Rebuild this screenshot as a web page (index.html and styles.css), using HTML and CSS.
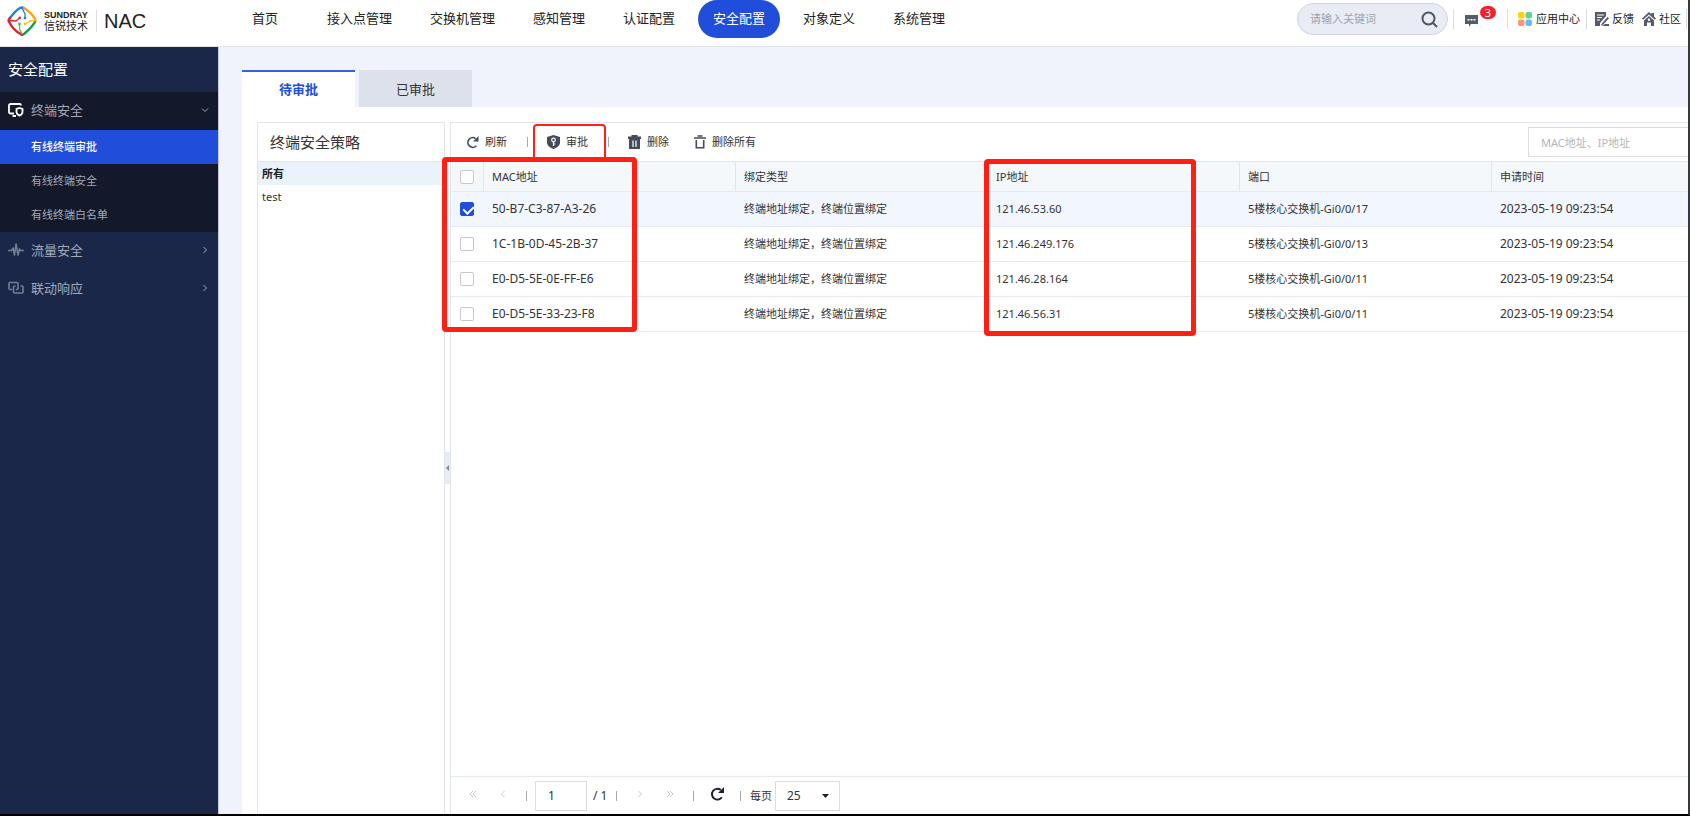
FILE: index.html
```html
<!DOCTYPE html>
<html lang="zh-CN">
<head>
<meta charset="utf-8">
<title>NAC 安全配置</title>
<link rel="stylesheet" href="styles.css">
</head>
<body>
<header class="topbar">
  <div class="brand">
    <svg class="brand-mark" viewBox="0 0 30 30" fill="none" stroke-linecap="round">
      <path d="M3 12C6 8 9 4 13 2q2-1 4 0" stroke="#1384d6" stroke-width="2.4"/>
      <path d="M17 2c5 3 8 6 10.500 10q1.500 2 .5 4" stroke="#f9a11b" stroke-width="2.400"/>
      <path d="M28 16c-3 5-6 8-11 12q-1 .8-2 .8" stroke="#1c9a46" stroke-width="2.400"/>
      <path d="M15 28.800C9 26 4 20 1.600 15q-.3-1.500 1.400-3" stroke="#dc2434" stroke-width="2.400"/>
      <path d="M2 14.500l7 .5 3-2.500" stroke="#dc2434" stroke-width="1.300"/>
      <circle cx="12.800" cy="11.800" r="1.300" fill="#dc2434"/>
      <path d="M15 2l3 6v3" stroke="#1384d6" stroke-width="1.300"/>
      <circle cx="18" cy="12" r="1.300" fill="#1384d6"/>
      <path d="M28 14.500l-5 .5-4 2.500" stroke="#f3c416" stroke-width="1.300"/>
      <circle cx="18" cy="18" r="1.400" fill="#f3c416"/>
      <path d="M15 28l-2.500-5v-4" stroke="#58b947" stroke-width="1.300"/>
      <circle cx="12.500" cy="18" r="1.400" fill="#58b947"/>
    </svg>
    <div class="brand-name"><span class="brand-en">SUNDRAY</span><span class="brand-cn">信锐技术</span></div>
    <span class="brand-product">NAC</span>
  </div>
  <nav class="mainnav">
    <a class="first" href="#">首页</a>
    <a href="#">接入点管理</a>
    <a href="#">交换机管理</a>
    <a href="#">感知管理</a>
    <a href="#">认证配置</a>
    <a class="active" href="#">安全配置</a>
    <a href="#">对象定义</a>
    <a href="#">系统管理</a>
  </nav>
  <div class="tools">
    <div class="search">
      <input type="text" placeholder="请输入关键词" aria-label="请输入关键词">
      <button type="button" aria-label="搜索"><svg width="17" height="17" viewBox="0 0 17 17" fill="none" stroke="#4b5566" stroke-width="2"><circle cx="7.500" cy="7.500" r="6"/><path d="M12 12l4 4"/></svg></button>
    </div>
    <button class="message" type="button" aria-label="消息">
      <svg width="13" height="12" viewBox="0 0 13 12"><path d="M0 0h13v9H6l-2 3V9H0z" fill="#555b67"/><path d="M2.500 4h2v1.500h-2zM5.500 4h2v1.500h-2zM8.500 4h2v1.500h-2z" fill="#fff"/></svg>
      <span class="badge">3</span>
    </button>
    <a class="tool apps" href="#"><svg width="14" height="14" viewBox="0 0 14 14"><rect width="6.500" height="6.500" rx="2" fill="#fbd20f"/><rect x="7.500" width="6.500" height="6.500" rx="2" fill="#5fd48a"/><rect y="7.500" width="6.500" height="6.500" rx="2" fill="#ff9472"/><rect x="7.500" y="7.500" width="6.500" height="6.500" rx="2" fill="#68baf7"/></svg>应用中心</a>
    <a class="tool feedback" href="#"><svg width="14" height="14" viewBox="0 0 14 14"><path d="M0 0h11v4L5 11v3H0z" fill="#555b67"/><path d="M2 3h7M2 5.500h5M2 8h3" stroke="#fff" stroke-width="1"/><path d="M6.500 12l6-7 1.500 1.300-6 6.500-2 .7zM10 12h4v2H7z" fill="#555b67"/></svg>反馈</a>
    <a class="tool community" href="#"><svg width="14" height="14" viewBox="0 0 14 14"><path d="M7 0l2.500 2.200V1H12v3.500l2 2-1.200 1.200L7 2.500 1.200 7.700 0 6.500z" fill="#555b67"/><path d="M7 4l5 4.500V14H9v-3.500H5V14H2V8.500z" fill="#555b67"/><circle cx="7" cy="7.800" r="1.200" fill="#fff"/></svg>社区</a>
  </div>
</header>
<div class="workspace">
  <aside class="sidebar">
    <h1>安全配置</h1>
    <section class="open">
      <button class="group" type="button">
        <svg width="16" height="14" viewBox="0 0 16 14" fill="none" stroke="#fff" stroke-width="1.800"><path d="M6 10.500H2.500A1.500 1.500 0 0 1 1 9V2.500A1.500 1.500 0 0 1 2.500 1h9A1.500 1.500 0 0 1 13 2.500M4.500 13H8"/><path d="M11.500 5l3 1v3c0 1.700-1.200 2.800-3 3.600-1.800-.8-3-1.900-3-3.600V6z"/></svg>
        <span>终端安全</span>
        <svg class="chev" width="8" height="8" viewBox="0 0 8 8" fill="none" stroke="#a3a9b8"><path d="M1 2.500l3 3 3-3"/></svg>
      </button>
      <a class="active" href="#">有线终端审批</a>
      <a href="#">有线终端安全</a>
      <a href="#">有线终端白名单</a>
    </section>
    <button class="group" type="button">
      <svg width="16" height="14" viewBox="0 0 16 14" fill="none" stroke="#757d93" stroke-width="1.600"><path d="M0 7.500h3.500L5 5l1.500 7L8 1l2 11 1.500-6 1 1.500H16" stroke-linejoin="round"/></svg>
      <span>流量安全</span>
      <svg class="chev" width="8" height="8" viewBox="0 0 8 8" fill="none" stroke="#a3a9b8"><path d="M2.500 1l3 3-3 3"/></svg>
    </button>
    <button class="group" type="button">
      <svg width="16" height="14" viewBox="0 0 16 14" fill="none" stroke="#757d93" stroke-width="1.600"><path d="M4 8.500H2A1 1 0 0 1 1 7.500V2.500A1 1 0 0 1 2 1.500h7A1 1 0 0 1 10 2.500v5A1 1 0 0 1 9 8.500H8"/><path d="M7.500 5h-1A1 1 0 0 0 5.500 6v5a1 1 0 0 0 1 1H14a1 1 0 0 0 1-1V6a1 1 0 0 0-1-1h-1.500"/></svg>
      <span>联动响应</span>
      <svg class="chev" width="8" height="8" viewBox="0 0 8 8" fill="none" stroke="#a3a9b8"><path d="M2.500 1l3 3-3 3"/></svg>
    </button>
  </aside>
  <main class="content">
    <div class="tabs">
      <button class="active" type="button">待审批</button>
      <button type="button">已审批</button>
    </div>
    <div class="page">
      <section class="policies">
        <h2>终端安全策略</h2>
        <ul>
          <li class="active">所有</li>
          <li>test</li>
        </ul>
      </section>
      <div class="splitter"><button type="button" aria-label="收起"><svg width="3" height="6" viewBox="0 0 3 6"><path d="M3 0v6L0 3z" fill="#888"/></svg></button></div>
      <section class="grid">
        <div class="toolbar">
          <button type="button"><svg width="13" height="13" viewBox="0 0 13 13"><path d="M10.300 9.700A4.800 4.800 0 1 1 9.500 2.600" fill="none" stroke="#444b5a" stroke-width="1.700"/><path d="M12.500 0v5.500H7z" fill="#444b5a"/></svg>刷新</button>
          <i class="sep"></i>
          <button type="button"><svg width="13" height="14" viewBox="0 0 13 14"><path d="M6.500 0L13 2v5.500c0 3-3 5.200-6.500 6.500C3 12.700 0 10.500 0 7.500V2z" fill="#444b5a"/><circle cx="6.500" cy="5" r="1.800" fill="none" stroke="#fff" stroke-width="1.200"/><path d="M6.500 6.800V11M6.500 9h1.800" stroke="#fff" stroke-width="1.200"/></svg>审批</button>
          <i class="sep"></i>
          <button type="button"><svg width="13" height="14" viewBox="0 0 13 14" fill="#444b5a"><path d="M0 1.500h3.500V0h6v1.500H13V4H0zM1 4h11v10H1z"/><path d="M5 5.500V12M8 5.500V12" stroke="#fff" stroke-width="1.200"/></svg>删除</button>
          <button class="clear" type="button"><svg width="12" height="14" viewBox="0 0 12 14" fill="none" stroke="#444b5a" stroke-width="1.600"><path d="M0 3h12M3.500 1h5M2.300 5v7.700h7.400V5"/></svg>删除所有</button>
          <input type="text" placeholder="MAC地址、IP地址" aria-label="MAC地址、IP地址">
        </div>
        <table>
          <colgroup><col class="c-check"><col class="c-data"><col class="c-data"><col class="c-data"><col class="c-data"><col></colgroup>
          <thead>
            <tr><th><input type="checkbox" aria-label="全选"></th><th>MAC地址</th><th>绑定类型</th><th>IP地址</th><th>端口</th><th>申请时间</th></tr>
          </thead>
          <tbody>
            <tr class="selected"><td><input type="checkbox" aria-label="50-B7-C3-87-A3-26" checked></td><td class="code">50-B7-C3-87-A3-26</td><td>终端地址绑定，终端位置绑定</td><td>121.46.53.60</td><td>5楼核心交换机-Gi0/0/17</td><td class="code">2023-05-19 09:23:54</td></tr>
            <tr><td><input type="checkbox" aria-label="1C-1B-0D-45-2B-37"></td><td class="code">1C-1B-0D-45-2B-37</td><td>终端地址绑定，终端位置绑定</td><td>121.46.249.176</td><td>5楼核心交换机-Gi0/0/13</td><td class="code">2023-05-19 09:23:54</td></tr>
            <tr><td><input type="checkbox" aria-label="E0-D5-5E-0E-FF-E6"></td><td class="code">E0-D5-5E-0E-FF-E6</td><td>终端地址绑定，终端位置绑定</td><td>121.46.28.164</td><td>5楼核心交换机-Gi0/0/11</td><td class="code">2023-05-19 09:23:54</td></tr>
            <tr><td><input type="checkbox" aria-label="E0-D5-5E-33-23-F8"></td><td class="code">E0-D5-5E-33-23-F8</td><td>终端地址绑定，终端位置绑定</td><td>121.46.56.31</td><td>5楼核心交换机-Gi0/0/11</td><td class="code">2023-05-19 09:23:54</td></tr>
          </tbody>
        </table>
        <div class="pager">
          <button type="button" aria-label="首页"><svg width="8" height="8" viewBox="0 0 8 8" fill="none" stroke="#c6c9ce"><path d="M4 1L1 4l3 3M7 1L4 4l3 3"/></svg></button>
          <button type="button" aria-label="上一页"><svg width="8" height="8" viewBox="0 0 8 8" fill="none" stroke="#c6c9ce"><path d="M5.500 1l-3 3 3 3"/></svg></button>
          <i class="sep"></i>
          <input type="text" value="1" aria-label="页码">
          <span class="total">/ 1</span>
          <i class="sep"></i>
          <button type="button" aria-label="下一页"><svg width="8" height="8" viewBox="0 0 8 8" fill="none" stroke="#c6c9ce"><path d="M2.500 1l3 3-3 3"/></svg></button>
          <button type="button" aria-label="末页"><svg width="8" height="8" viewBox="0 0 8 8" fill="none" stroke="#c6c9ce"><path d="M1 1l3 3-3 3M4 1l3 3-3 3"/></svg></button>
          <i class="sep"></i>
          <button type="button" aria-label="刷新"><svg width="14" height="14" viewBox="0 0 13 13"><path d="M11 9.500A5 5 0 1 1 10 2.800" fill="none" stroke="#1d2129" stroke-width="1.800"/><path d="M13 0v5.500H7.500z" fill="#1d2129"/></svg></button>
          <i class="sep"></i>
          <label for="size">每页</label>
          <span class="select"><select id="size"><option>25</option></select><svg width="7" height="4" viewBox="0 0 7 4"><path d="M0 0h7L3.500 4z" fill="#222"/></svg></span>
        </div>
        <div class="mark mark-approve"></div>
        <div class="mark mark-mac"></div>
        <div class="mark mark-ip"></div>
      </section>
    </div>
  </main>
</div>
</body>
</html>
```

FILE: styles.css
```css
* { box-sizing: border-box; }

body {
  margin: 0;
  height: 100vh;
  display: flex;
  flex-direction: column;
  overflow: hidden;
  border-right: 2px solid #38393b;
  border-bottom: 2px solid #000;
  background: #fff;
  color: #333;
  font: 11px/16px "Noto Sans", "Noto Sans CJK SC", sans-serif;
}

a { color: inherit; text-decoration: none; }
svg { display: block; flex: none; }

button, input, select {
  margin: 0;
  padding: 0;
  border: 0;
  background: none;
  color: inherit;
  font: inherit;
}

ul, h1, h2 { margin: 0; padding: 0; list-style: none; font-weight: 400; }

/* Top bar */
.topbar {
  flex: none;
  display: flex;
  height: 47px;
  border-bottom: 1px solid #dfe3ea;
}

.brand { display: flex; align-items: center; width: 237px; height: 42px; padding-left: 7px; }
.brand-mark { width: 30px; height: 30px; }
.brand-name { display: flex; flex-direction: column; margin-left: 7px; padding-right: 8px; border-right: 1px solid #ddd; color: #222; }
.brand-en { font: bold 9px/10px "Liberation Sans", sans-serif; }
.brand-cn { line-height: 12px; }
.brand-product { margin-left: 7px; color: #222; font: 20px/24px "Liberation Sans", sans-serif; }

.mainnav { display: flex; gap: 8px; height: 38px; color: #222; font-size: 13px; line-height: 36px; white-space: nowrap; }
.mainnav a { padding: 0 15px; }
.mainnav .first { margin-right: 11px; }
.mainnav .active { border-radius: 19px; background: #204dd9; color: #fff; }

.tools { display: flex; align-items: center; height: 38px; margin-left: auto; padding-right: 1px; color: #222; }
.search { display: flex; align-items: center; width: 151px; height: 32px; padding: 0 9px 0 12px; border: 1px solid #cfd5e0; border-radius: 16px; background: #e9ecf5; }
.search input { flex: 1; min-width: 0; }
.search input::placeholder { color: #9da3af; }
.message { position: relative; display: flex; align-items: center; width: 55px; height: 20px; margin-left: 5px; padding-left: 11px; border-left: 1px solid #ddd; border-right: 1px solid #ddd; }
.message svg { margin-top: 4px; }
.badge { position: absolute; left: 26px; top: -3px; width: 16px; height: 13px; border-radius: 7px; background: #f5222d; color: #fff; line-height: 13px; text-align: center; }
.tool { display: flex; align-items: center; height: 20px; gap: 3px; white-space: nowrap; }
.apps { gap: 4px; padding: 0 6px 0 10px; border-right: 1px solid #ddd; }
.feedback { padding: 0 8px; }
.community { padding-right: 5px; border-right: 1px solid #ddd; }

/* Sidebar */
.workspace { flex: 1; min-height: 0; display: flex; }
.sidebar { flex: none; width: 219px; border-right: 1px solid #c5cad8; background: #1b2749; color: #a4a9b6; }
.sidebar h1 { padding-left: 8px; color: #fff; font-size: 15px; line-height: 45px; }
.open { background: #13182a; }
.open a { display: block; padding-left: 31px; line-height: 34px; }
.open a.active { background: #204dd9; color: #fff; font-weight: 500; }
.group { display: flex; align-items: center; width: 100%; height: 38px; padding: 0 9px 2px 8px; gap: 7px; font-size: 13px; }
.chev { margin-left: auto; }

/* Tabs */
.content { flex: 1; min-width: 0; display: flex; flex-direction: column; padding: 23px 0 0 23px; background: #f0f3fc; }
.tabs { display: flex; gap: 4px; }
.tabs button { width: 113px; height: 37px; padding-bottom: 2px; border-top: 2px solid #dde1ec; background: #dde1ec; font-size: 13px; }
.tabs .active { border-top-color: #3560e0; background: #fff; color: #204dd9; font-weight: 700; }
.page { flex: 1; min-height: 0; display: flex; padding: 15px 0 0 15px; background: #fff; }

/* Policy list */
.policies { flex: none; width: 188px; border: 1px solid #dfe4f0; border-bottom: 0; }
.policies h2 { padding-left: 12px; border-bottom: 1px solid #dfe4f0; font-size: 15px; line-height: 38px; }
.policies li { padding: 0 4px; line-height: 23px; }
.policies .active { background: #eaf2fb; color: #222; font-weight: 700; }

.splitter { flex: none; display: flex; align-items: center; width: 5px; }
.splitter button { display: flex; align-items: center; justify-content: center; width: 5px; height: 32px; background: #e9edf1; }

/* Grid */
.grid { position: relative; flex: 1; min-width: 0; display: flex; flex-direction: column; border: 1px solid #dfe4f0; border-width: 1px 0 0 1px; }
.toolbar { display: flex; align-items: center; height: 38px; padding-left: 15px; white-space: nowrap; }
.toolbar button { display: flex; align-items: center; gap: 6px; }
.toolbar .sep { margin: 0 19px 0 20px; }
.toolbar .clear { margin-left: 25px; }
.toolbar input { width: 160px; height: 30px; margin-left: auto; padding-left: 12px; border: 1px solid #dcdcdc; border-right: 0; }
.toolbar input::placeholder { color: #b5b5b5; }
.sep { width: 1px; height: 10px; background: #aaa; }

table { width: 100%; table-layout: fixed; border-collapse: separate; border-spacing: 0; }
.c-check { width: 33px; }
.c-data { width: 252px; }
th, td { padding: 0 8px; border-bottom: 1px solid #e6e9f2; text-align: left; white-space: nowrap; }
th { height: 31px; border-top: 1px solid #dfe4f0; border-right: 1px solid #dfe4f0; background: #f4f8fb; font-weight: 400; }
th:last-child { border-right: 0; }
td { height: 35px; }
.code { font-size: 12px; }
.selected td { background: #f2f6ff; }

[type="checkbox"] { display: block; appearance: none; width: 14px; height: 14px; margin-left: 1px; border: 1px solid #c8c8c8; border-radius: 2px; background: #fff; }
[type="checkbox"]:checked { border-color: #204dd9; background: #204dd9; }
[type="checkbox"]:checked::before { content: ""; display: block; width: 5px; height: 8px; margin: 1px 0 0 4px; border: solid #fff; border-width: 0 2px 2px 0; transform: rotate(45deg); }

/* Pager */
.pager { display: flex; align-items: center; height: 38px; margin-top: auto; padding-left: 7px; border-top: 1px solid #e6e9f2; font-size: 12px; }
.pager button { display: flex; align-items: center; justify-content: center; width: 30px; height: 30px; padding-bottom: 4px; }
.pager .sep { margin: 0 8px; }
.pager input { width: 52px; height: 30px; padding-left: 12px; border: 1px solid #dcdcdc; }
.total { width: 21px; padding-left: 6px; white-space: nowrap; }
.pager label { margin: 0 3px 0 1px; font-size: 11px; }
.select { position: relative; }
.select select { display: block; appearance: none; width: 65px; height: 30px; padding-left: 11px; border: 1px solid #dcdcdc; }
.select svg { position: absolute; right: 11px; top: 13px; }

/* Highlight frames */
.mark { position: absolute; border: 5px solid #ff2013; border-radius: 4px; pointer-events: none; }
.mark-approve { left: 82px; top: 1px; width: 73px; height: 38px; border-width: 2px; }
.mark-mac { left: -9px; top: 34px; width: 195px; height: 175px; }
.mark-ip { left: 533px; top: 36px; width: 212px; height: 177px; }
```
